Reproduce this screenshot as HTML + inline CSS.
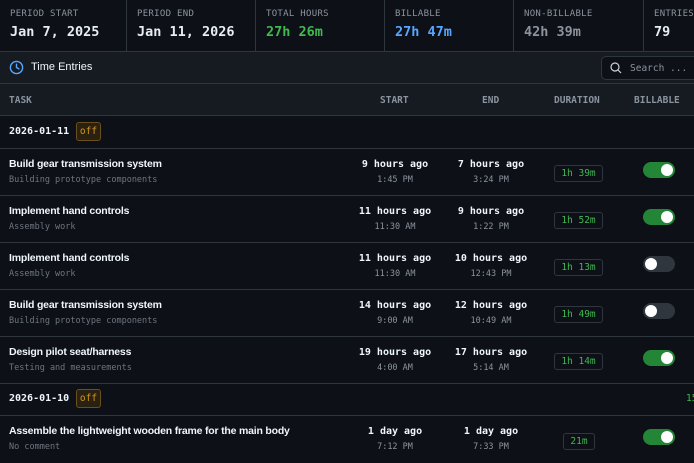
<!DOCTYPE html>
<html><head><meta charset="utf-8"><style>
*{margin:0;padding:0;box-sizing:border-box}
body{width:694px;height:462px;overflow:hidden;background:#0d1017;color:#e6edf3;font-family:"DejaVu Sans Mono","Liberation Mono",monospace;position:relative}
.a{position:absolute;white-space:nowrap}
.stats{position:absolute;left:0;top:0;width:694px;height:52px;border-bottom:1px solid #30363d;background:#0d1017}
.st{position:absolute;top:0;height:51px;border-right:1px solid #30363d}
.lbl{position:absolute;top:9px;left:10px;font-size:9px;color:#8b949e;letter-spacing:.3px}
.val{position:absolute;top:24px;left:10px;font-size:13.5px;font-weight:bold}
.sec{position:absolute;top:52px;left:0;width:694px;height:32px;background:#161b22;border-bottom:1px solid #30363d}
.th{position:absolute;top:84px;left:0;width:694px;height:32px;background:#161b22;border-bottom:1px solid #30363d;font-size:9.5px;font-weight:bold;color:#8b949e}
.grp{position:absolute;left:0;width:694px;height:33px;border-bottom:1px solid #30363d}
.row{position:absolute;left:0;width:694px;height:47px;border-bottom:1px solid #30363d}
.t{position:absolute;left:9px;top:9px;font-family:"Liberation Sans",sans-serif;font-size:10.5px;font-weight:bold;color:#f0f6fc;letter-spacing:-0.2px}
.d{position:absolute;left:9px;top:26px;font-size:8.5px;color:#6e7681}
.c{position:absolute;width:120px;text-align:center}
.c1{font-size:10px;font-weight:bold;top:10px;color:#f0f6fc}
.c2{font-size:8.5px;top:26px;color:#8b949e}
.dur{position:absolute;left:554px;top:16px;width:49px;height:17px;border:1px solid #30363d;border-radius:3px;color:#3fb950;font-size:9.5px;text-align:center;line-height:15px}
.tg{position:absolute;left:643px;top:13px;width:32px;height:16px;border-radius:8px;background:#238636}
.tg::after{content:"";position:absolute;top:2px;right:2px;width:12px;height:12px;border-radius:50%;background:#fff}
.tg.off{background:#30363d}
.tg.off::after{right:auto;left:2px}
.gd{position:absolute;left:9px;top:10px;font-size:10px;font-weight:bold;color:#f0f6fc}
.off-b{position:absolute;left:76px;top:6px;width:25px;height:19px;border:1px solid #6b4f1d;background:#2a2110;border-radius:3px;color:#d29922;font-size:9.5px;text-align:center;line-height:17px}
</style></head><body>
<div class="stats">
<div class="st" style="left:0;width:127px"><div class="lbl">PERIOD START</div><div class="val">Jan 7, 2025</div></div>
<div class="st" style="left:127px;width:129px"><div class="lbl">PERIOD END</div><div class="val">Jan 11, 2026</div></div>
<div class="st" style="left:256px;width:129px"><div class="lbl">TOTAL HOURS</div><div class="val" style="color:#3fb950">27h 26m</div></div>
<div class="st" style="left:385px;width:129px"><div class="lbl">BILLABLE</div><div class="val" style="color:#58a6ff">27h 47m</div></div>
<div class="st" style="left:514px;width:130px"><div class="lbl">NON-BILLABLE</div><div class="val" style="color:#8b949e">42h 39m</div></div>
<div class="st" style="left:644px;width:60px;border:none"><div class="lbl">ENTRIES</div><div class="val">79</div></div>
</div>
<div class="sec">
<svg class="a" style="left:9px;top:8px" width="15" height="15" viewBox="0 0 16 16"><circle cx="8" cy="8" r="6.5" fill="none" stroke="#58a6ff" stroke-width="1.5"/><path d="M8 4.5V8l2.5 1.5" fill="none" stroke="#58a6ff" stroke-width="1.5" stroke-linecap="round"/></svg>
<div class="a" style="left:31px;top:9px;font-family:'Liberation Sans',sans-serif;font-size:11px;color:#f0f6fc">Time Entries</div>
<div class="a" style="left:601px;top:4px;width:100px;height:24px;border:1px solid #30363d;border-radius:5px;background:#0d1017">
<svg class="a" style="left:8px;top:5px" width="12" height="12" viewBox="0 0 12 12"><circle cx="5" cy="5" r="4" fill="none" stroke="#c9d1d9" stroke-width="1.2"/><path d="M8 8l3 3" stroke="#c9d1d9" stroke-width="1.2"/></svg>
<div class="a" style="left:28px;top:6px;font-size:9.5px;color:#8b949e">Search ...</div></div>
</div>
<div class="th">
<div class="a" style="left:9px;top:11px">TASK</div>
<div class="a" style="left:380px;top:11px">START</div>
<div class="a" style="left:482px;top:11px">END</div>
<div class="a" style="left:554px;top:11px">DURATION</div>
<div class="a" style="left:634px;top:11px">BILLABLE</div>
</div>
<div class="grp" style="top:116px"><div class="gd">2026-01-11</div><div class="off-b">off</div></div>
<div class="row" style="top:149px"><div class="t">Build gear transmission system</div><div class="d">Building prototype components</div>
<div class="c c1" style="left:335px">9 hours ago</div><div class="c c2" style="left:335px">1:45 PM</div>
<div class="c c1" style="left:431px">7 hours ago</div><div class="c c2" style="left:431px">3:24 PM</div>
<div class="dur">1h 39m</div><div class="tg"></div></div>
<div class="row" style="top:196px"><div class="t">Implement hand controls</div><div class="d">Assembly work</div>
<div class="c c1" style="left:335px">11 hours ago</div><div class="c c2" style="left:335px">11:30 AM</div>
<div class="c c1" style="left:431px">9 hours ago</div><div class="c c2" style="left:431px">1:22 PM</div>
<div class="dur">1h 52m</div><div class="tg"></div></div>
<div class="row" style="top:243px"><div class="t">Implement hand controls</div><div class="d">Assembly work</div>
<div class="c c1" style="left:335px">11 hours ago</div><div class="c c2" style="left:335px">11:30 AM</div>
<div class="c c1" style="left:431px">10 hours ago</div><div class="c c2" style="left:431px">12:43 PM</div>
<div class="dur">1h 13m</div><div class="tg off"></div></div>
<div class="row" style="top:290px"><div class="t">Build gear transmission system</div><div class="d">Building prototype components</div>
<div class="c c1" style="left:335px">14 hours ago</div><div class="c c2" style="left:335px">9:00 AM</div>
<div class="c c1" style="left:431px">12 hours ago</div><div class="c c2" style="left:431px">10:49 AM</div>
<div class="dur">1h 49m</div><div class="tg off"></div></div>
<div class="row" style="top:337px"><div class="t">Design pilot seat/harness</div><div class="d">Testing and measurements</div>
<div class="c c1" style="left:335px">19 hours ago</div><div class="c c2" style="left:335px">4:00 AM</div>
<div class="c c1" style="left:431px">17 hours ago</div><div class="c c2" style="left:431px">5:14 AM</div>
<div class="dur">1h 14m</div><div class="tg"></div></div>
<div class="grp" style="top:383px"><div class="gd">2026-01-10</div><div class="off-b">off</div><div class="a" style="left:686px;top:10px;font-size:9.5px;color:#3fb950">15</div></div>
<div class="row" style="top:416px;border:none"><div class="t">Assemble the lightweight wooden frame for the main body</div><div class="d">No comment</div>
<div class="c c1" style="left:335px">1 day ago</div><div class="c c2" style="left:335px">7:12 PM</div>
<div class="c c1" style="left:431px">1 day ago</div><div class="c c2" style="left:431px">7:33 PM</div>
<div class="dur" style="left:563px;top:17px;width:32px">21m</div><div class="tg" style="top:13px"></div></div>
</body></html>
